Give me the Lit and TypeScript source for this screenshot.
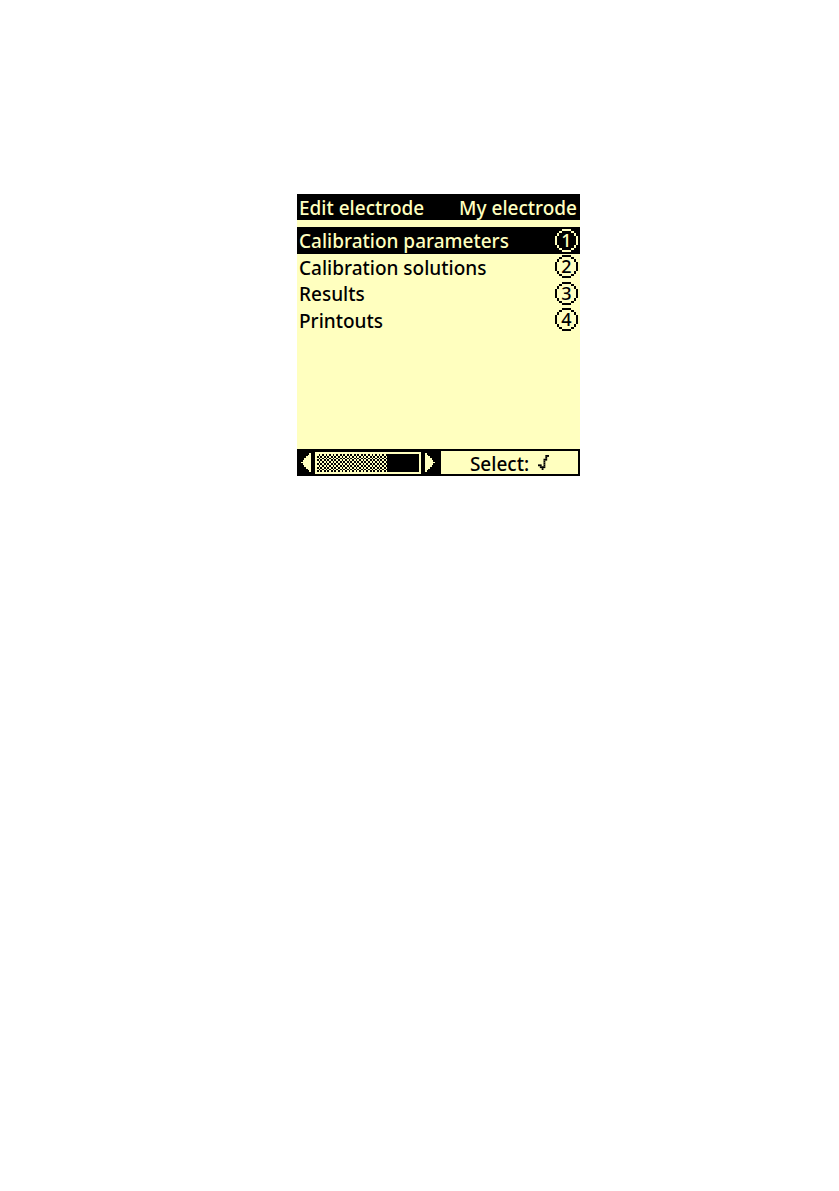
import { LitElement, html, svg, css } from 'lit';
import { customElement, property, state } from 'lit/decorators.js';

interface MenuEntry {
  id: number;
  label: string;
}

const ENTRIES: MenuEntry[] = [
  { id: 1, label: 'Calibration parameters' },
  { id: 2, label: 'Calibration solutions' },
  { id: 3, label: 'Results' },
  { id: 4, label: 'Printouts' },
];

/** Draws a small bitmap, one rect per run of "#" in each row. */
function bitmap(rows: string[]) {
  return rows.flatMap((row, y) =>
    [...row.matchAll(/#+/g)].map(
      (run) => svg`<rect x=${run.index} y=${y} width=${run[0].length} height="1"></rect>`
    )
  );
}

const RING = [
  '....#####....',
  '..##.....##..',
  '.#.........#.',
  '.#.........#.',
  '#...........#',
  '#...........#',
  '#...........#',
  '#...........#',
  '#...........#',
  '.#.........#.',
  '.#.........#.',
  '..##.....##..',
  '....#####....',
];

const TICK = [
  '....##',
  '....#.',
  '...##.',
  '...#..',
  '...#..',
  '##.#..',
  '.###..',
  '..#...',
];

const ARROW = [
  '.....#',
  '....##',
  '...###',
  '..####',
  '.#####',
  '######',
  '.#####',
  '..####',
  '...###',
  '....##',
  '.....#',
];

/**
 * KeyBadge - number of the key that opens a menu entry, in a ring
 */
@customElement('key-badge')
export class KeyBadge extends LitElement {
  @property({ type: Number }) value = 0;

  static styles = css`
    :host {
      display: grid;
      place-items: center;
      width: 23px;
      height: 23px;
    }

    svg,
    span {
      grid-area: 1 / 1;
    }

    svg {
      width: 23px;
      height: 23px;
      fill: currentColor;
    }

    span {
      font-size: 18px;
      line-height: 23px;
    }
  `;

  render() {
    return html`
      <svg viewBox="0 0 13 13" shape-rendering="crispEdges" aria-hidden="true">${bitmap(RING)}</svg>
      <span>${this.value}</span>
    `;
  }
}

/**
 * AppRoot - electrode menu on the instrument display
 */
@customElement('app-root')
export class AppRoot extends LitElement {
  @state() private selected = 1;

  static styles = css`
    :host {
      --paper: #ffffbf;
      --ink: #000;
      display: grid;
      grid-template-columns: minmax(16px, 297fr) minmax(270px, 283fr) minmax(16px, 259fr);
      padding: 194px 0 24px;
      background: #fff;
      font-family: 'Noto Sans', 'Open Sans', sans-serif;
      font-size: 19px;
      font-weight: 500;
      line-height: 24px;
      color: var(--ink);
    }

    .screen {
      grid-column: 2;
      display: flex;
      flex-direction: column;
      aspect-ratio: 283 / 282;
      background: var(--paper);
    }

    button {
      margin: 0;
      padding: 0;
      border: none;
      background: none;
      font: inherit;
      color: inherit;
      cursor: pointer;
    }

    header {
      display: flex;
      justify-content: space-between;
      padding: 0 3px 0 2px;
      background: var(--ink);
      color: var(--paper);
      white-space: nowrap;
    }

    h1 {
      margin: 0;
      font: inherit;
    }

    .label {
      padding-top: 2px;
    }

    .menu {
      flex: 1;
      display: grid;
      grid-template-rows: repeat(8, 1fr);
      padding: 7px 0 10px;
    }

    .entry {
      display: flex;
      align-items: center;
      justify-content: space-between;
      padding: 0 2px;
      white-space: nowrap;
    }

    .entry.selected {
      background: var(--ink);
      color: var(--paper);
    }

    footer {
      display: flex;
      height: 27px;
      background: var(--ink);
      color: var(--paper);
    }

    .pager {
      flex: 1;
      display: flex;
      align-items: center;
      justify-content: space-between;
      padding: 0 4px;
    }

    .arrow,
    .arrow svg {
      display: block;
      width: 10px;
      height: 19px;
      fill: currentColor;
    }

    .arrow.next svg {
      transform: scaleX(-1);
    }

    .track {
      width: 106px;
      height: 22px;
    }

    .select {
      display: flex;
      align-items: center;
      justify-content: center;
      gap: 9px;
      width: 141px;
      border: 2px solid var(--ink);
      background: var(--paper);
      color: var(--ink);
    }

    .select svg {
      width: 11px;
      height: 15px;
      fill: currentColor;
    }
  `;

  private move(step: number) {
    const next = this.selected + step;
    if (next >= 1 && next <= ENTRIES.length) {
      this.selected = next;
    }
  }

  private handleSelect() {
    this.dispatchEvent(new CustomEvent('entry-open', { detail: { id: this.selected } }));
  }

  private renderArrow(direction: 'prev' | 'next', step: number) {
    return html`
      <button class="arrow ${direction}" aria-label=${direction} @click=${() => this.move(step)}>
        <svg viewBox="0 0 6 11" preserveAspectRatio="none" shape-rendering="crispEdges">
          ${bitmap(ARROW)}
        </svg>
      </button>
    `;
  }

  private renderTrack() {
    const rows = Array.from({ length: 10 }, (_, y) => (y % 2 ? '.#' : '#.').repeat(20));
    return html`
      <svg
        class="track"
        viewBox="0 0 60 12"
        preserveAspectRatio="none"
        shape-rendering="crispEdges"
        fill="currentColor"
        aria-hidden="true"
      >
        <path d="M0 0H60V12H0ZM1 1V11H59V1Z" fill-rule="evenodd"></path>
        <g transform="translate(1 1)">${bitmap(rows)}</g>
      </svg>
    `;
  }

  render() {
    return html`
      <main class="screen">
        <header>
          <h1 class="label">Edit electrode</h1>
          <span class="label">My electrode</span>
        </header>

        <nav class="menu">
          ${ENTRIES.map(
            (entry) => html`
              <button
                class="entry ${entry.id === this.selected ? 'selected' : ''}"
                @click=${() => (this.selected = entry.id)}
              >
                <span class="label">${entry.label}</span>
                <key-badge .value=${entry.id}></key-badge>
              </button>
            `
          )}
        </nav>

        <footer>
          <div class="pager">
            ${this.renderArrow('prev', -1)} ${this.renderTrack()} ${this.renderArrow('next', 1)}
          </div>
          <button class="select" @click=${this.handleSelect}>
            <span class="label">Select:</span>
            <svg viewBox="0 0 6 8" preserveAspectRatio="none" aria-hidden="true">${bitmap(TICK)}</svg>
          </button>
        </footer>
      </main>
    `;
  }
}
